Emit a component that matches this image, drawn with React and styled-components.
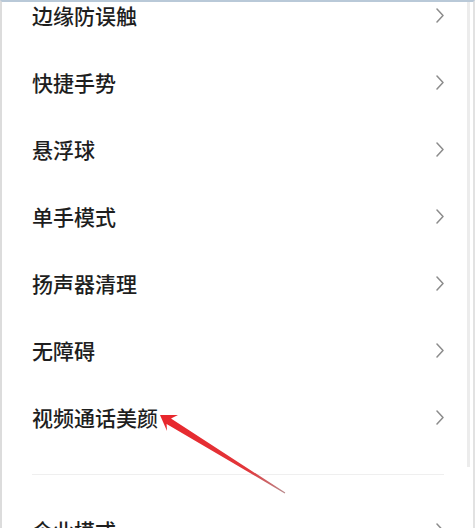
import React from "react";
import styled, { createGlobalStyle } from "styled-components";

const GlobalStyle = createGlobalStyle`
  html, body {
    margin: 0;
    padding: 0;
    background: #ffffff;
  }
`;

const groups = [
  ["边缘防误触", "快捷手势", "悬浮球", "单手模式", "扬声器清理", "无障碍", "视频通话美颜"],
  ["企业模式"],
];

function Chevron() {
  return (
    <ChevronIcon viewBox="0 0 8 15" aria-hidden="true">
      <path d="M1 1 L7 7.5 L1 14" />
    </ChevronIcon>
  );
}

function App() {
  return (
    <>
      <GlobalStyle />
      <Screen>
        <List>
          {groups.map((items, gi) => (
            <Group key={gi} divided={gi > 0}>
              {items.map((label) => (
                <Row key={label}>
                  <Label>{label}</Label>
                  <Chevron />
                </Row>
              ))}
            </Group>
          ))}
        </List>
        <Scrollbar />
        <Arrow viewBox="0 0 475 528">
          <defs>
            <linearGradient id="arrowFill" x1="160" y1="415" x2="285" y2="493" gradientUnits="userSpaceOnUse">
              <stop offset="0" stopColor="#e8262c" />
              <stop offset="0.7" stopColor="#e2363a" />
              <stop offset="1" stopColor="#b88a8c" />
            </linearGradient>
          </defs>
          <polygon
            fill="url(#arrowFill)"
            points="160,415 178,415 171,418.6 285.3,492.6 284.7,493.4 166.6,424 167,431"
          />
        </Arrow>
      </Screen>
    </>
  );
}

const Screen = styled.div`
  position: relative;
  width: 475px;
  height: 528px;
  overflow: hidden;
  box-sizing: border-box;
  background: #ffffff;
  border-top: 2px solid #b9c9d8;
  border-left: 2px solid #dcdcdc;
  border-right: 2px solid #e2e2e2;
  font-family: "Noto Sans CJK SC", "Noto Sans", sans-serif;
`;

const List = styled.div`
  display: flex;
  flex-direction: column;
  margin-top: -20px;
  padding: 0 29px 0 30px;
`;

const Group = styled.div`
  display: flex;
  flex-direction: column;
  ${(props) =>
    props.divided &&
    `
    margin-top: 23px;
    padding-top: 22px;
    border-top: 1px solid #efefef;
  `}
`;

const Row = styled.div`
  display: flex;
  align-items: center;
  justify-content: space-between;
  height: 67px;
`;

const Label = styled.span`
  font-size: 21px;
  font-weight: 500;
  color: #1e1e1e;
  line-height: 1;
`;

const ChevronIcon = styled.svg`
  width: 8px;
  height: 15px;
  fill: none;
  stroke: #8c8c8c;
  stroke-width: 1.5;
  stroke-linecap: round;
  stroke-linejoin: round;
`;

const Scrollbar = styled.div`
  position: absolute;
  top: 0;
  right: 3px;
  width: 3px;
  height: 465px;
  background: #ececec;
`;

const Arrow = styled.svg`
  position: absolute;
  left: -2px;
  top: -2px;
  width: 475px;
  height: 528px;
  pointer-events: none;
`;

export default App;
